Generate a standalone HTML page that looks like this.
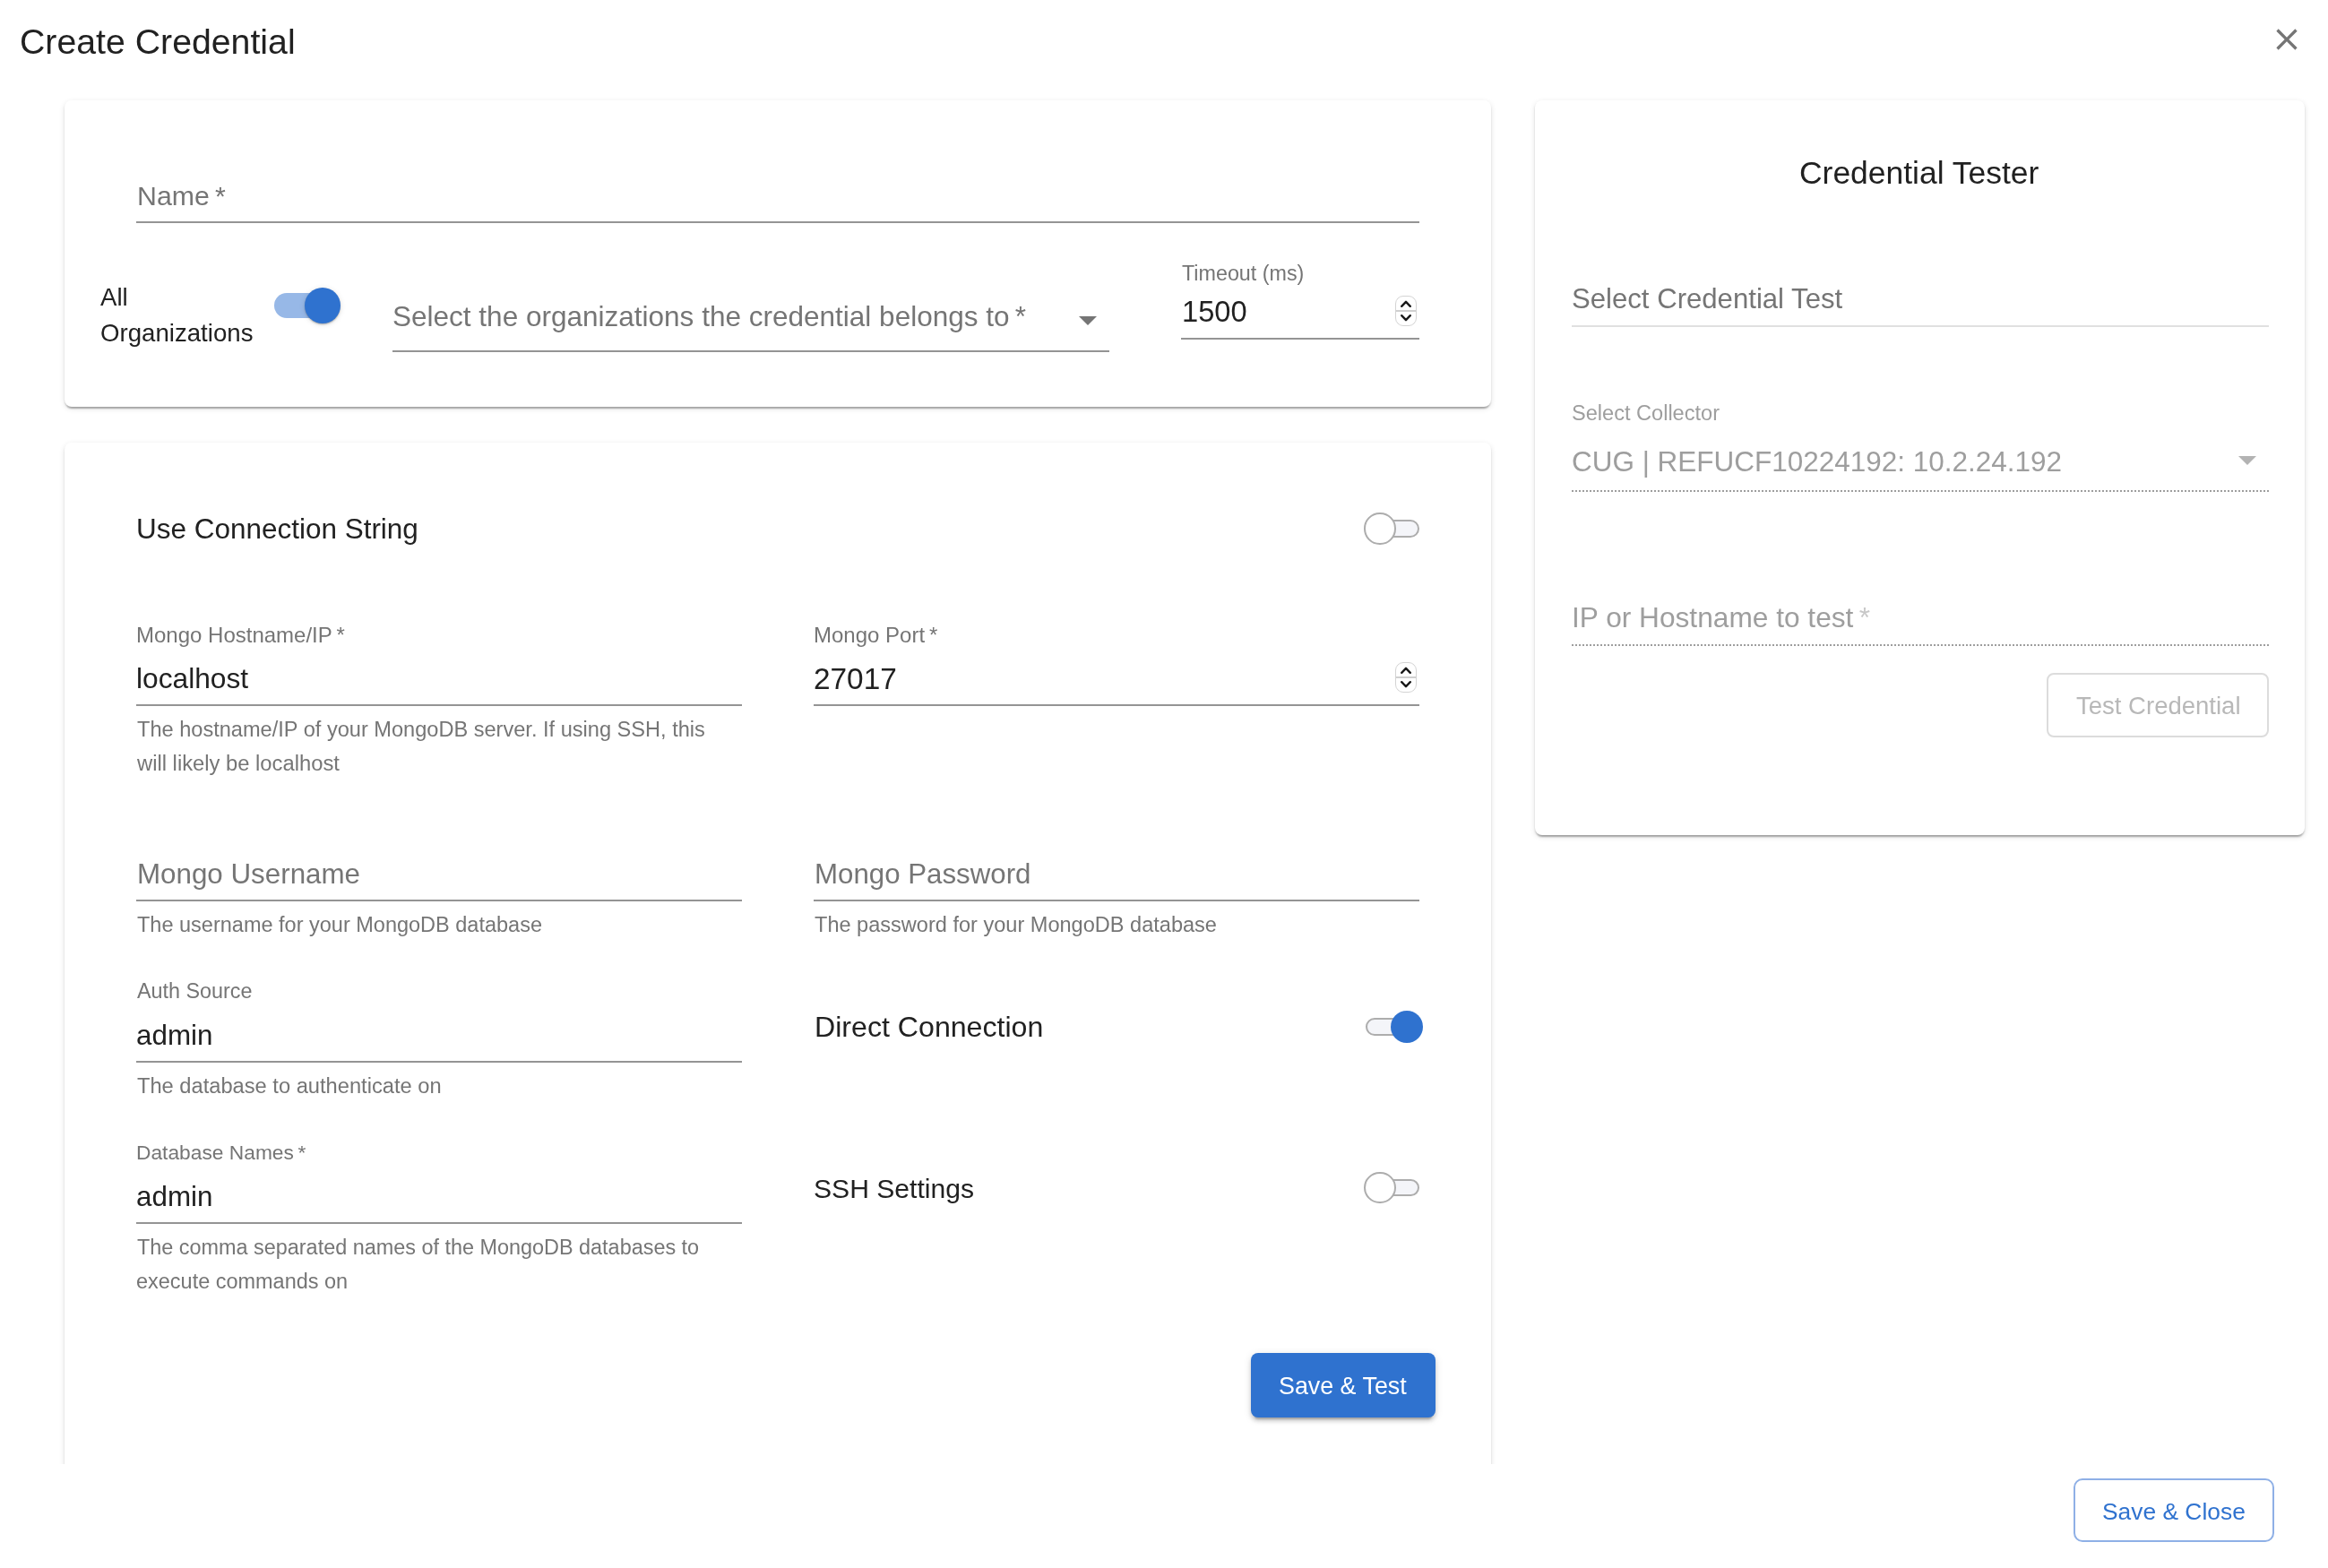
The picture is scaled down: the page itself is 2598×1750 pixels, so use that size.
<!DOCTYPE html>
<html><head><meta charset="utf-8"><title>Create Credential</title>
<style>
html,body{margin:0;padding:0;background:#fff;}
body{width:2598px;height:1750px;position:relative;overflow:hidden;font-family:"Liberation Sans",sans-serif;}
.t{position:absolute;white-space:nowrap;line-height:1;will-change:transform;}
</style></head><body>
<div id="title" class="t" style="left:21.60px;top:27.47px;font-size:39.255px;color:#212121;">Create Credential</div>
<svg style="position:absolute;left:2532px;top:24px" width="40" height="40" viewBox="0 0 24 24"><path fill="#757575" d="M19 6.41L17.59 5 12 10.59 6.41 5 5 6.41 10.59 12 5 17.59 6.41 19 12 13.41 17.59 19 19 17.59 13.41 12z"/></svg>
<div style="position:absolute;left:0;top:0;width:1700px;height:1634px;overflow:hidden">
<div style="position:absolute;left:72px;top:112px;width:1592px;height:342px;background:#fff;border-radius:8px;box-shadow:0 4px 2px -2px rgba(0,0,0,.2),0 2px 2px 0 rgba(0,0,0,.14),0 2px 6px 0 rgba(0,0,0,.12)"></div>
<div style="position:absolute;left:72px;top:494px;width:1592px;height:1306px;background:#fff;border-radius:8px;box-shadow:0 4px 2px -2px rgba(0,0,0,.2),0 2px 2px 0 rgba(0,0,0,.14),0 2px 6px 0 rgba(0,0,0,.12)"></div>
<div id="name" class="t" style="left:153.00px;top:203.74px;font-size:30.314px;color:#757575;">Name&thinsp;*</div>
<div style="position:absolute;left:152px;top:247px;width:1432px;height:2px;background:#949494"></div>
<div id="all" class="t" style="left:112.00px;top:318.21px;font-size:27.630px;color:#212121;">All</div>
<div id="orgs" class="t" style="left:111.70px;top:357.71px;font-size:27.635px;color:#212121;">Organizations</div>
<div style="position:absolute;left:306px;top:327px;width:68px;height:28px;background:#97b8e7;border-radius:14px"></div>
<div style="position:absolute;left:340px;top:321px;width:40px;height:40px;background:#2f72cf;border-radius:50%;box-shadow:0 2px 2px -1px rgba(0,0,0,.2),0 1px 2px 0 rgba(0,0,0,.14),0 1px 6px 0 rgba(0,0,0,.12)"></div>
<div id="selorg" class="t" style="left:438.00px;top:338.41px;font-size:31.534px;color:#757575;">Select the organizations the credential belongs to&thinsp;*</div>
<div style="position:absolute;left:438px;top:391px;width:800px;height:2px;background:#949494"></div>
<svg style="position:absolute;left:1204px;top:353px" width="20" height="10" viewBox="0 0 20 10"><path d="M0 0H20L10.0 10Z" fill="#757575"/></svg>
<div id="timeout" class="t" style="left:1319.00px;top:294.26px;font-size:23.319px;color:#757575;">Timeout (ms)</div>
<div id="v1500" class="t" style="left:1318.50px;top:332.26px;font-size:32.652px;color:#212121;">1500</div>
<div style="position:absolute;left:1318px;top:377px;width:266px;height:2px;background:#949494"></div>
<svg style="position:absolute;left:1557px;top:330px" width="24" height="34" viewBox="0 0 24 34">
<rect x="0.5" y="0.5" width="23" height="33" rx="8.5" fill="#fff" stroke="#d4d4d4"/>
<line x1="1" y1="17" x2="23" y2="17" stroke="#d0d0d0" stroke-width="2"/>
<path d="M7.2 11.8L12 6.8L16.8 11.8" fill="none" stroke="#1a1a1a" stroke-width="2.4" stroke-linecap="round" stroke-linejoin="round"/>
<path d="M7.2 22.2L12 27.2L16.8 22.2" fill="none" stroke="#1a1a1a" stroke-width="2.4" stroke-linecap="round" stroke-linejoin="round"/>
</svg>
<div id="useconn" class="t" style="left:152.00px;top:574.55px;font-size:31.477px;color:#212121;">Use Connection String</div>
<div style="position:absolute;left:1532px;top:580.25px;width:52px;height:19.5px;box-sizing:border-box;border:2px solid #adadad;background:#f4f5f9;border-radius:10px"></div>
<div style="position:absolute;left:1522.3px;top:572.3px;width:35.40000000000009px;height:35.40000000000009px;box-sizing:border-box;border:2px solid #adadad;background:#fff;border-radius:50%"></div>
<div id="mhost" class="t" style="left:152.10px;top:696.68px;font-size:24.010px;color:#757575;">Mongo Hostname/IP&thinsp;*</div>
<div id="localhost" class="t" style="left:152.00px;top:741.76px;font-size:31.701px;color:#212121;">localhost</div>
<div style="position:absolute;left:152px;top:786px;width:676px;height:2px;background:#949494"></div>
<div id="help1" class="t" style="left:153.00px;top:802.64px;font-size:23.581px;color:#757575;">The hostname/IP of your MongoDB server. If using SSH, this</div>
<div id="help1b" class="t" style="left:153.25px;top:840.46px;font-size:23.788px;color:#757575;">will likely be localhost</div>
<div id="mport" class="t" style="left:907.50px;top:696.56px;font-size:24.026px;color:#757575;">Mongo Port&thinsp;*</div>
<div id="v27017" class="t" style="left:908.00px;top:740.85px;font-size:33.372px;color:#212121;">27017</div>
<div style="position:absolute;left:908px;top:786px;width:676px;height:2px;background:#949494"></div>
<svg style="position:absolute;left:1557px;top:739px" width="24" height="34" viewBox="0 0 24 34">
<rect x="0.5" y="0.5" width="23" height="33" rx="8.5" fill="#fff" stroke="#d4d4d4"/>
<line x1="1" y1="17" x2="23" y2="17" stroke="#d0d0d0" stroke-width="2"/>
<path d="M7.2 11.8L12 6.8L16.8 11.8" fill="none" stroke="#1a1a1a" stroke-width="2.4" stroke-linecap="round" stroke-linejoin="round"/>
<path d="M7.2 22.2L12 27.2L16.8 22.2" fill="none" stroke="#1a1a1a" stroke-width="2.4" stroke-linecap="round" stroke-linejoin="round"/>
</svg>
<div id="muser" class="t" style="left:152.50px;top:960.08px;font-size:31.330px;color:#757575;">Mongo Username</div>
<div style="position:absolute;left:152px;top:1004px;width:676px;height:2px;background:#949494"></div>
<div id="userhelp" class="t" style="left:153.00px;top:1021.00px;font-size:23.505px;color:#757575;">The username for your MongoDB database</div>
<div id="mpass" class="t" style="left:908.50px;top:960.15px;font-size:31.251px;color:#757575;">Mongo Password</div>
<div style="position:absolute;left:908px;top:1004px;width:676px;height:2px;background:#949494"></div>
<div id="passhelp" class="t" style="left:909.00px;top:1020.66px;font-size:23.558px;color:#757575;">The password for your MongoDB database</div>
<div id="authsrc" class="t" style="left:153.00px;top:1094.83px;font-size:23.356px;color:#757575;">Auth Source</div>
<div id="admin1" class="t" style="left:152.00px;top:1139.75px;font-size:31.368px;color:#212121;">admin</div>
<div style="position:absolute;left:152px;top:1184px;width:676px;height:2px;background:#949494"></div>
<div id="authhelp" class="t" style="left:153.00px;top:1200.56px;font-size:23.680px;color:#757575;">The database to authenticate on</div>
<div id="direct" class="t" style="left:909.00px;top:1129.79px;font-size:32.146px;color:#212121;">Direct Connection</div>
<div style="position:absolute;left:1524px;top:1136.2px;width:54px;height:19.59999999999991px;box-sizing:border-box;border:2px solid #adadad;background:#f4f5f9;border-radius:10px"></div>
<div style="position:absolute;left:1552px;top:1128px;width:36px;height:36px;background:#2f72cf;border-radius:50%"></div>
<div id="dbnames" class="t" style="left:151.50px;top:1275.31px;font-size:22.786px;color:#757575;">Database Names&thinsp;*</div>
<div id="admin2" class="t" style="left:152.00px;top:1320.05px;font-size:31.368px;color:#212121;">admin</div>
<div style="position:absolute;left:152px;top:1364px;width:676px;height:2px;background:#949494"></div>
<div id="dbhelp1" class="t" style="left:153.00px;top:1380.78px;font-size:23.410px;color:#757575;">The comma separated names of the MongoDB databases to</div>
<div id="dbhelp2" class="t" style="left:152.00px;top:1418.73px;font-size:23.473px;color:#757575;">execute commands on</div>
<div id="ssh" class="t" style="left:908.00px;top:1311.60px;font-size:30.120px;color:#212121;">SSH Settings</div>
<div style="position:absolute;left:1532px;top:1315.75px;width:52px;height:19.5px;box-sizing:border-box;border:2px solid #adadad;background:#f4f5f9;border-radius:10px"></div>
<div style="position:absolute;left:1522.3px;top:1307.8px;width:35.40000000000009px;height:35.40000000000009px;box-sizing:border-box;border:2px solid #adadad;background:#fff;border-radius:50%"></div>
<div style="position:absolute;left:1396px;top:1510px;width:206px;height:72px;background:#2f72cf;border-radius:8px;box-shadow:0 6px 2px -4px rgba(0,0,0,.2),0 4px 4px 0 rgba(0,0,0,.14),0 2px 10px 0 rgba(0,0,0,.12)"></div>
<div id="savetest" class="t" style="left:1426.50px;top:1533.88px;font-size:26.835px;color:#fff;">Save &amp; Test</div>
</div>
<div style="position:absolute;left:1713px;top:112px;width:859px;height:820px;background:#fff;border-radius:8px;box-shadow:0 4px 2px -2px rgba(0,0,0,.2),0 2px 2px 0 rgba(0,0,0,.14),0 2px 6px 0 rgba(0,0,0,.12)"></div>
<div id="credtester" class="t" style="left:2008.30px;top:175.59px;font-size:35.452px;color:#212121;">Credential Tester</div>
<div id="selcredtest" class="t" style="left:1754.00px;top:318.24px;font-size:31.145px;color:#757575;">Select Credential Test</div>
<div style="position:absolute;left:1754px;top:363px;width:778px;height:2px;background:#e0e0e0"></div>
<div id="selcollector" class="t" style="left:1754.00px;top:450.05px;font-size:23.571px;color:#9e9e9e;">Select Collector</div>
<div id="cug" class="t" style="left:1754.00px;top:499.55px;font-size:31.487px;color:#9e9e9e;">CUG | REFUCF10224192: 10.2.24.192</div>
<svg style="position:absolute;left:2498px;top:509px" width="20" height="10" viewBox="0 0 20 10"><path d="M0 0H20L10.0 10Z" fill="#b3b3b3"/></svg>
<div style="position:absolute;left:1754px;top:547px;width:778px;height:2px;background:repeating-linear-gradient(90deg,#9e9e9e 0 2px,transparent 2px 4px)"></div>
<div id="iphost" class="t" style="left:1753.50px;top:674.09px;font-size:31.674px;color:#9e9e9e;">IP or Hostname to test<span style="color:#c8c8c8">&thinsp;*</span></div>
<div style="position:absolute;left:1754px;top:719px;width:778px;height:2px;background:repeating-linear-gradient(90deg,#9e9e9e 0 2px,transparent 2px 4px)"></div>
<div style="position:absolute;left:2284px;top:751px;width:248px;height:72px;box-sizing:border-box;border:2px solid #dcdcdc;border-radius:8px"></div>
<div id="testcred" class="t" style="left:2317.20px;top:774.29px;font-size:27.537px;color:#b8b8b8;">Test Credential</div>
<div style="position:absolute;left:2314px;top:1650px;width:224px;height:71px;box-sizing:border-box;border:2px solid #8fb0e6;border-radius:10px"></div>
<div id="saveclose" class="t" style="left:2345.60px;top:1674.06px;font-size:26.393px;color:#2f72cf;">Save &amp; Close</div>
</body></html>
